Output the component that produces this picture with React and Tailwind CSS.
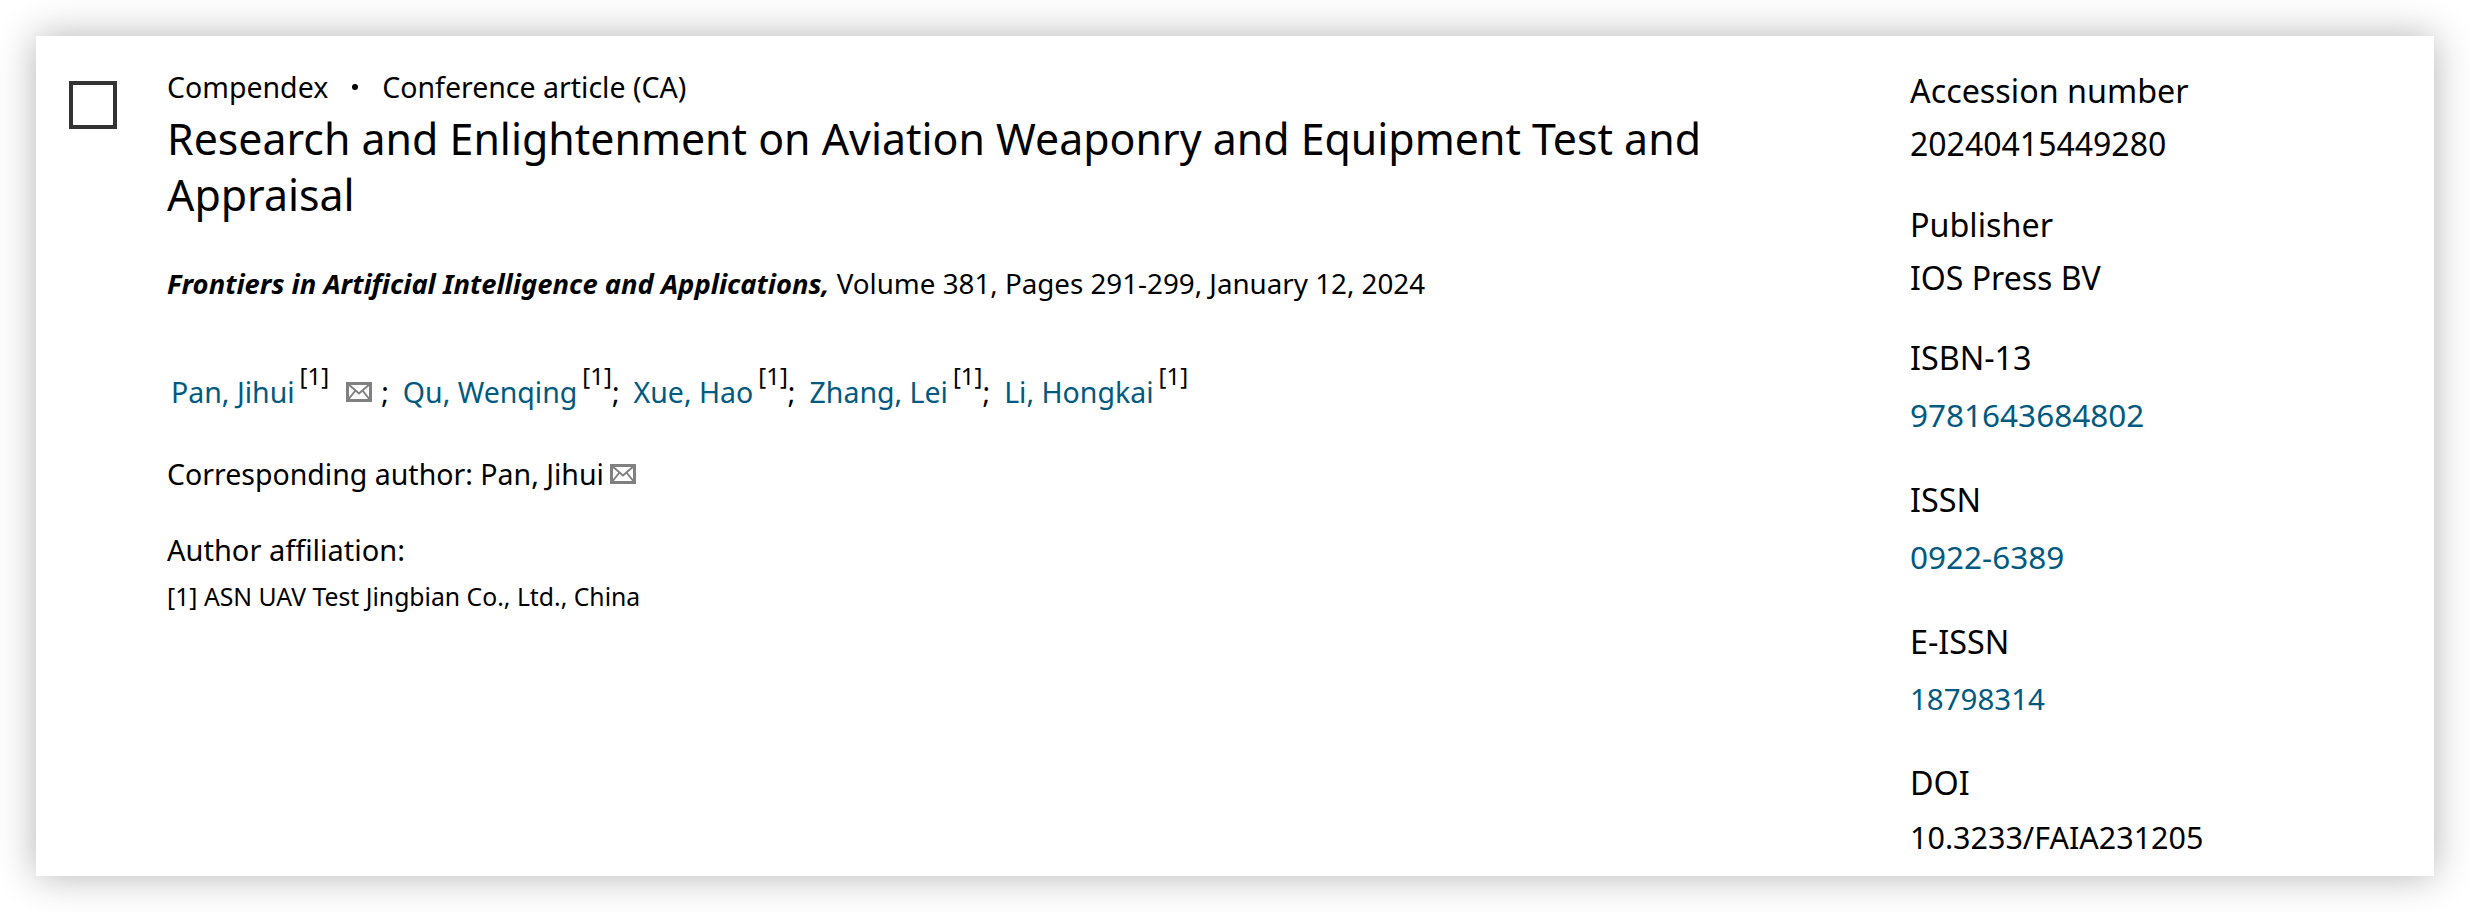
const mail = (
  <svg viewBox="0 0 26 20" className="w-[26px] h-[20px] inline-block" fill="none" stroke="#808080" strokeWidth="3" aria-hidden="true">
    <rect x="1.5" y="1.5" width="23" height="17" />
    <path d="M1.5 1.5 L13 11.5 L24.5 1.5 M1.5 18.5 L9.5 8.5 M24.5 18.5 L16.5 8.5" strokeWidth="2" />
  </svg>
);

const authors = [
  { name: 'Pan, Jihui', mail: true },
  { name: 'Qu, Wenqing', semi: true },
  { name: 'Xue, Hao', semi: true },
  { name: 'Zhang, Lei', semi: true },
  { name: 'Li, Hongkai' },
];

const details = [
  { label: 'Accession number', value: '20240415449280', size: 'text-[32px] mt-[10px]', gap: 'mb-[36px]' },
  { label: 'Publisher', value: 'IOS Press BV', size: 'text-[32px] mt-[10px]', gap: 'mb-[35px]' },
  { label: 'ISBN-13', value: '9781643684802', size: 'text-[31.5px] mt-[14px] text-[#005a80]', gap: 'mb-[40px]' },
  { label: 'ISSN', value: '0922-6389', size: 'text-[31.5px] mt-[14px] text-[#005a80]', gap: 'mb-[40px]' },
  { label: 'E-ISSN', value: '18798314', size: 'text-[29.5px] mt-[14px] text-[#005a80]', gap: 'mb-[39px]' },
  { label: 'DOI', value: '10.3233/FAIA231205', size: 'text-[30.5px] mt-[11px]', gap: '' },
];

export default function App() {
  return (
    <div className="w-[2470px] h-[912px] bg-white p-[36px] font-['Noto_Sans',sans-serif] text-black text-[28.5px] leading-[44px] overflow-hidden">
      <div className="h-[840px] bg-white shadow-[0_0_36px_rgba(0,0,0,0.3)] flex overflow-hidden">
        <div className="w-[48px] h-[48px] ml-[33px] mt-[45px] border-[4px] border-[#333] shrink-0" />
        <div className="ml-[50px] w-[1591px] pt-[29px] shrink-0">
          <div className="flex items-center h-[44px]">
            <span>Compendex</span>
            <span className="w-[6px] h-[6px] rounded-full bg-black mx-[24px]" />
            <span>Conference article (CA)</span>
          </div>
          <h1 className="text-[42.85px] leading-[56px] w-[1560px] mt-[2px]">
            Research and Enlightenment on Aviation Weaponry and Equipment Test and Appraisal
          </h1>
          <div className="mt-[38px] text-[27.75px]">
            <i className="font-bold text-[27.4px]">Frontiers in Artificial Intelligence and Applications,</i> Volume 381, Pages 291-299, January 12, 2024
          </div>
          <div className="mt-[62px] flex items-center h-[48px] pl-[4px] text-[28.5px]">
            {authors.map(a => (
              <span key={a.name} className="flex items-center">
                <a className="text-[#005a80]">{a.name}</a>
                <sup className="text-[24px] top-[-16px] ml-[5px] relative">[1]</sup>
                {a.mail && <span className="ml-[17px] mr-[9px] flex">{mail}</span>}
                {a.mail && <span className="mr-[14px]">;</span>}
                {a.semi && <span className="mr-[14px]">;</span>}
              </span>
            ))}
          </div>
          <div className="mt-[36px] flex items-center">
            Corresponding author: Pan, Jihui<span className="ml-[6px] flex">{mail}</span>
          </div>
          <div className="mt-[32px] text-[29px]">Author affiliation:</div>
          <div className="text-[24.75px] leading-[40px] mt-[5px]">[1] ASN UAV Test Jingbian Co., Ltd., China</div>
        </div>
        <div className="ml-[152px] pt-[32px] text-[32.3px]">
          {details.map(d => (
            <div key={d.label} className={d.gap}>
              <div className="leading-[44px]">{d.label}</div>
              <div className={`leading-[44px] ${d.size}`}>{d.value}</div>
            </div>
          ))}
        </div>
      </div>
    </div>
  );
}
